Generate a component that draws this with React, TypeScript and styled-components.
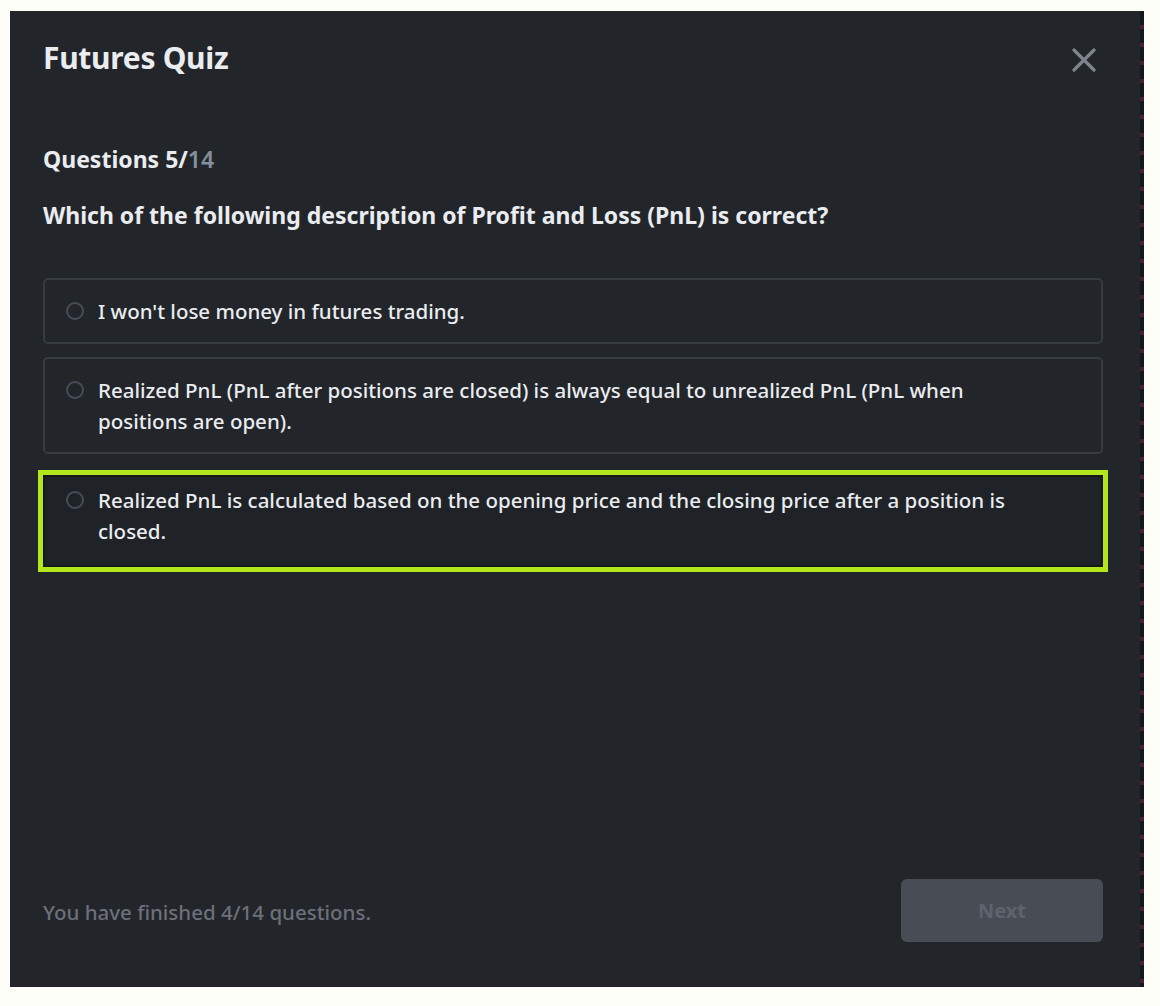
import React from "react";
import styled, { createGlobalStyle } from "styled-components";

const Global = createGlobalStyle`
  html, body { margin: 0; padding: 0; background: #fefef8; }
  body { font-family: "Noto Sans", "Open Sans", Arial, sans-serif; }
`;

const Page = styled.div`
  width: 1160px;
  height: 1006px;
  padding: 11px 0 0 10px;
  box-sizing: border-box;
  display: flex;
`;

const Frame = styled.div`
  display: flex;
  height: 976px;
`;

const Modal = styled.div`
  width: 1130px;
  height: 976px;
  background: #22262b;
  box-sizing: border-box;
  padding: 27px 37px 45px 33px;
  display: flex;
  flex-direction: column;
  color: #eaecef;
`;

const ChartEdge = styled.div`
  width: 4px;
  background: repeating-linear-gradient(
    180deg,
    #15181b 0px,
    #15181b 14px,
    #4a2029 14px,
    #4a2029 18px
  );
`;

const Header = styled.div`
  display: flex;
  align-items: center;
  justify-content: space-between;
  height: 40px;
`;

const Title = styled.h1`
  margin: 0;
  font-size: 30px;
  line-height: 40px;
  font-weight: 700;
  letter-spacing: -0.3px;
  color: #eaecef;
`;

const CloseBtn = styled.button`
  background: none;
  border: none;
  padding: 0;
  width: 24px;
  height: 24px;
  margin-right: 7px;
  margin-top: 3px;
  display: flex;
  align-items: center;
  justify-content: center;
  cursor: pointer;
`;

const Counter = styled.div`
  margin-top: 66px;
  font-size: 23px;
  line-height: 30px;
  font-weight: 700;
  color: #eaecef;
`;

const Total = styled.span`
  color: #848e9c;
  font-weight: 600;
`;

const Question = styled.div`
  margin-top: 26px;
  font-size: 23px;
  line-height: 30px;
  font-weight: 700;
  color: #eaecef;
`;

const Options = styled.div`
  margin-top: 48px;
  display: flex;
  flex-direction: column;
  gap: 13px;
`;

const Option = styled.div<{ $hl?: boolean }>`
  display: flex;
  align-items: flex-start;
  gap: 14px;
  box-sizing: border-box;
  padding: 15.5px 50px 15.5px 21px;
  border: 2px solid #363b42;
  border-radius: 5px;
  font-size: 20.5px;
  line-height: 31px;
  font-weight: 500;
  color: #eaecef;
  ${(p) =>
    p.$hl &&
    `
    margin: 3px -5px 0;
    border: 5px solid #b3e61d;
    border-radius: 0;
    padding: 10px 55px 20px 23px;
    box-shadow: inset 0 0 0 2px #16191c;
    background: #1f2327;
  `}
`;

const Radio = styled.span`
  flex: none;
  width: 18px;
  height: 18px;
  border: 2px solid #474d57;
  border-radius: 50%;
  box-sizing: border-box;
  margin-top: 6px;
`;

const Spacer = styled.div`
  flex: 1;
`;

const Footer = styled.div`
  display: flex;
  align-items: center;
  justify-content: space-between;
`;

const Finished = styled.div`
  font-size: 20.5px;
  color: #6b7079;
  font-weight: 500;
  margin-top: 3px;
`;

const NextBtn = styled.button`
  width: 202px;
  height: 63px;
  border: none;
  border-radius: 6px;
  background: #474c55;
  color: #5e646d;
  font-family: inherit;
  font-size: 20px;
  font-weight: 700;
`;

const options = [
  "I won't lose money in futures trading.",
  "Realized PnL (PnL after positions are closed) is always equal to unrealized PnL (PnL when positions are open).",
  "Realized PnL is calculated based on the opening price and the closing price after a position is closed.",
];

export default function App() {
  return (
    <>
      <Global />
      <Page>
        <Frame>
          <Modal>
            <Header>
              <Title>Futures Quiz</Title>
              <CloseBtn aria-label="close">
                <svg width="24" height="24" viewBox="0 0 24 24">
                  <path d="M2 2 L22 22 M22 2 L2 22" stroke="#80858d" strokeWidth="3.2" strokeLinecap="round" />
                </svg>
              </CloseBtn>
            </Header>
            <Counter>
              Questions 5/<Total>14</Total>
            </Counter>
            <Question>Which of the following description of Profit and Loss (PnL) is correct?</Question>
            <Options>
              {options.map((o, i) => (
                <Option key={i} $hl={i === 2}>
                  <Radio />
                  <span>{o}</span>
                </Option>
              ))}
            </Options>
            <Spacer />
            <Footer>
              <Finished>You have finished 4/14 questions.</Finished>
              <NextBtn>Next</NextBtn>
            </Footer>
          </Modal>
          <ChartEdge />
        </Frame>
      </Page>
    </>
  );
}
